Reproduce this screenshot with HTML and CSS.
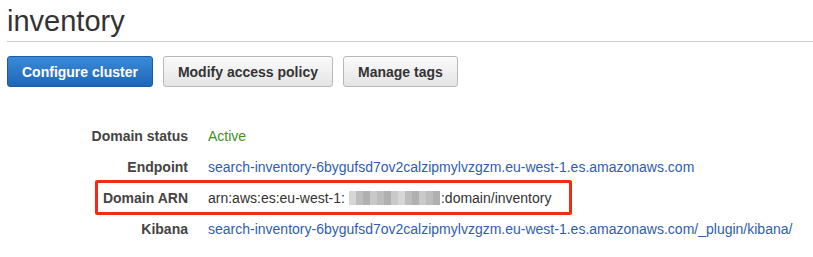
FILE: index.html
```html
<!DOCTYPE html>
<html lang="en">
<head>
    <meta charset="UTF-8">
    <meta name="viewport" content="width=device-width, initial-scale=1.0">
    <title>inventory</title>
    <link rel="stylesheet" href="styles.css">
</head>
<body>
<div class="page">
    <h1>inventory</h1>

    <!-- Acciones -->
    <div class="actions">
        <button class="btn btn-primary">Configure cluster</button>
        <button class="btn">Modify access policy</button>
        <button class="btn">Manage tags</button>
    </div>

    <!-- Detalles del dominio -->
    <div class="details">
        <div class="detail-row">
            <span class="label">Domain status</span>
            <span class="value status">Active</span>
        </div>
        <div class="detail-row">
            <span class="label">Endpoint</span>
            <a class="value link" href="#">search-inventory-6bygufsd7ov2calzipmylvzgzm.eu-west-1.es.amazonaws.com</a>
        </div>
        <div class="detail-row highlight">
            <span class="label">Domain ARN</span>
            <span class="value">arn:aws:es:eu-west-1:<span class="redacted"><i class="p4"></i><i class="p2"></i><i class="p3"></i><i class="p1"></i><i class="p2"></i><i class="p3"></i><i class="p1"></i><i class="p4"></i><i class="p2"></i><i class="p3"></i><i class="p1"></i><i class="p2"></i><i class="p3"></i></span>:domain/inventory</span>
        </div>
        <div class="detail-row">
            <span class="label">Kibana</span>
            <a class="value link" href="#">search-inventory-6bygufsd7ov2calzipmylvzgzm.eu-west-1.es.amazonaws.com/_plugin/kibana/</a>
        </div>
    </div>
</div>
</body>
</html>
```

FILE: styles.css
```css
body {
    font-family: "Liberation Sans", Arial, sans-serif;
    background-color: #fff;
    color: #333;
    margin: 0;
    padding: 0;
}
.page {
    padding: 0 0 0 7px;
}
h1 {
    font-size: 29px;
    font-weight: normal;
    color: #333;
    margin: 0;
    padding-top: 4px;
    height: 37px;
    line-height: 34px;
    border-bottom: 1px solid #cccccc;
}
.actions {
    display: flex;
    gap: 10px;
    margin-top: 14px;
}
.btn {
    font-family: "Liberation Sans", Arial, sans-serif;
    font-size: 14px;
    font-weight: bold;
    height: 31px;
    padding: 0 14px;
    color: #333;
    background: linear-gradient(#fbfbfb, #e4e4e4);
    border: 1px solid #b8b8b8;
    border-radius: 3px;
}
.btn-primary {
    color: #fff;
    background: linear-gradient(#3b8ad9, #1e66b8);
    border-color: #1b5ca6;
}
.details {
    margin-top: 33px;
}
.detail-row {
    display: flex;
    align-items: center;
    gap: 20px;
    height: 31px;
    font-size: 14px;
}
.label {
    width: 181px;
    text-align: right;
    font-weight: bold;
    color: #444;
}
.value {
    color: #333;
    white-space: nowrap;
}
.status {
    color: #3f8f22;
}
.link {
    color: #2f5db0;
    text-decoration: none;
}
.highlight {
    position: relative;
}
.highlight::after {
    content: "";
    position: absolute;
    left: 88px;
    top: -2px;
    width: 471px;
    height: 29px;
    border: 3px solid #f42a17;
    border-radius: 2px;
}
.redacted {
    display: inline-flex;
    vertical-align: -2px;
    height: 14px;
    margin: 0 1px 0 4px;
}
.redacted i {
    width: 7px;
    height: 14px;
}
.p1 { background-color: #c9c9c9; }
.p2 { background-color: #bdbdbd; }
.p3 { background-color: #b0b0b0; }
.p4 { background-color: #d6d6d6; }
```
